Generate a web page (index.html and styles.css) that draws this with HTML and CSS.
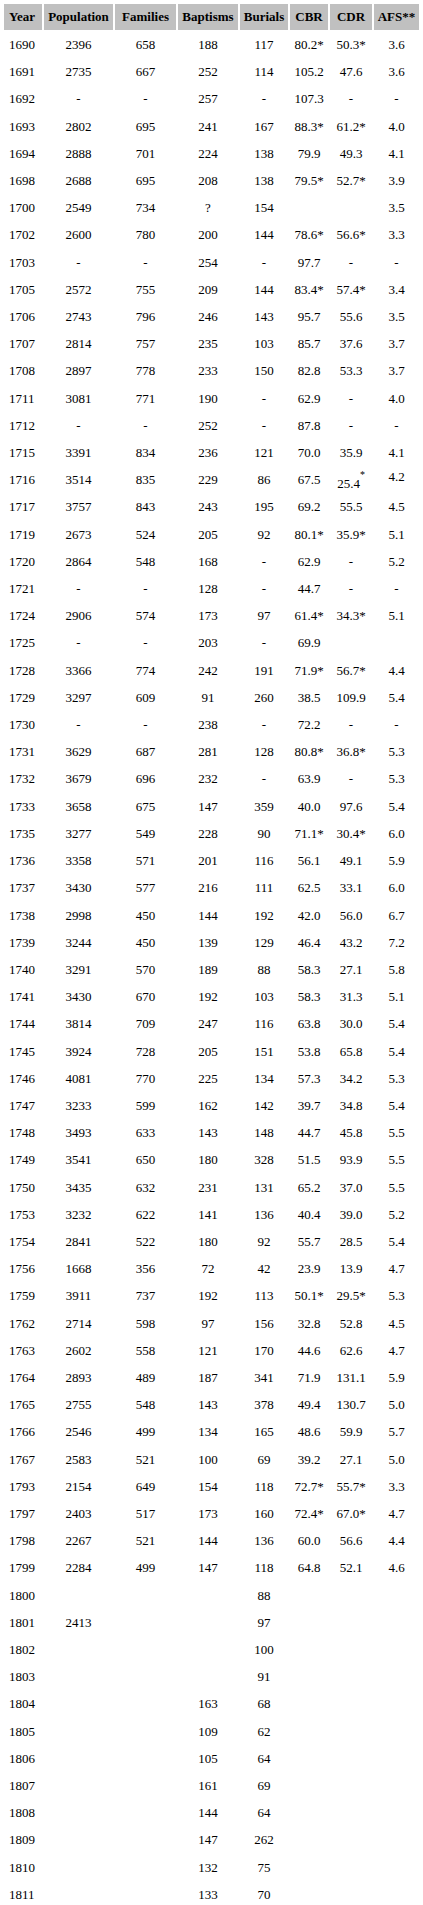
FILE: index.html
```html
<!DOCTYPE html>
<html>
<head>
<meta charset="utf-8">
<title>Population table</title>
<link rel="stylesheet" href="styles.css">
</head>
<body>
<table class="data">
<colgroup>
<col class="c-year"><col class="c-pop"><col class="c-fam"><col class="c-bap"><col class="c-bur"><col class="c-cbr"><col class="c-cdr"><col class="c-afs">
</colgroup>
<thead>
<tr class="head"><th>Year</th><th>Population</th><th>Families</th><th>Baptisms</th><th>Burials</th><th>CBR</th><th>CDR</th><th>AFS**</th></tr>
</thead>
<tbody>
<tr><td>1690</td><td>2396</td><td>658</td><td>188</td><td>117</td><td>80.2*</td><td>50.3*</td><td>3.6</td></tr>
<tr><td>1691</td><td>2735</td><td>667</td><td>252</td><td>114</td><td>105.2</td><td>47.6</td><td>3.6</td></tr>
<tr><td>1692</td><td>-</td><td>-</td><td>257</td><td>-</td><td>107.3</td><td>-</td><td>-</td></tr>
<tr><td>1693</td><td>2802</td><td>695</td><td>241</td><td>167</td><td>88.3*</td><td>61.2*</td><td>4.0</td></tr>
<tr><td>1694</td><td>2888</td><td>701</td><td>224</td><td>138</td><td>79.9</td><td>49.3</td><td>4.1</td></tr>
<tr><td>1698</td><td>2688</td><td>695</td><td>208</td><td>138</td><td>79.5*</td><td>52.7*</td><td>3.9</td></tr>
<tr><td>1700</td><td>2549</td><td>734</td><td>?</td><td>154</td><td></td><td></td><td>3.5</td></tr>
<tr><td>1702</td><td>2600</td><td>780</td><td>200</td><td>144</td><td>78.6*</td><td>56.6*</td><td>3.3</td></tr>
<tr><td>1703</td><td>-</td><td>-</td><td>254</td><td>-</td><td>97.7</td><td>-</td><td>-</td></tr>
<tr><td>1705</td><td>2572</td><td>755</td><td>209</td><td>144</td><td>83.4*</td><td>57.4*</td><td>3.4</td></tr>
<tr><td>1706</td><td>2743</td><td>796</td><td>246</td><td>143</td><td>95.7</td><td>55.6</td><td>3.5</td></tr>
<tr><td>1707</td><td>2814</td><td>757</td><td>235</td><td>103</td><td>85.7</td><td>37.6</td><td>3.7</td></tr>
<tr><td>1708</td><td>2897</td><td>778</td><td>233</td><td>150</td><td>82.8</td><td>53.3</td><td>3.7</td></tr>
<tr><td>1711</td><td>3081</td><td>771</td><td>190</td><td>-</td><td>62.9</td><td>-</td><td>4.0</td></tr>
<tr><td>1712</td><td>-</td><td>-</td><td>252</td><td>-</td><td>87.8</td><td>-</td><td>-</td></tr>
<tr><td>1715</td><td>3391</td><td>834</td><td>236</td><td>121</td><td>70.0</td><td>35.9</td><td>4.1</td></tr>
<tr><td>1716</td><td>3514</td><td>835</td><td>229</td><td>86</td><td>67.5</td><td><span class="low">25.4</span><sup class="mark">*</sup></td><td><span class="high">4.2</span></td></tr>
<tr><td>1717</td><td>3757</td><td>843</td><td>243</td><td>195</td><td>69.2</td><td>55.5</td><td>4.5</td></tr>
<tr><td>1719</td><td>2673</td><td>524</td><td>205</td><td>92</td><td>80.1*</td><td>35.9*</td><td>5.1</td></tr>
<tr><td>1720</td><td>2864</td><td>548</td><td>168</td><td>-</td><td>62.9</td><td>-</td><td>5.2</td></tr>
<tr><td>1721</td><td>-</td><td>-</td><td>128</td><td>-</td><td>44.7</td><td>-</td><td>-</td></tr>
<tr><td>1724</td><td>2906</td><td>574</td><td>173</td><td>97</td><td>61.4*</td><td>34.3*</td><td>5.1</td></tr>
<tr><td>1725</td><td>-</td><td>-</td><td>203</td><td>-</td><td>69.9</td><td></td><td></td></tr>
<tr><td>1728</td><td>3366</td><td>774</td><td>242</td><td>191</td><td>71.9*</td><td>56.7*</td><td>4.4</td></tr>
<tr><td>1729</td><td>3297</td><td>609</td><td>91</td><td>260</td><td>38.5</td><td>109.9</td><td>5.4</td></tr>
<tr><td>1730</td><td>-</td><td>-</td><td>238</td><td>-</td><td>72.2</td><td>-</td><td>-</td></tr>
<tr><td>1731</td><td>3629</td><td>687</td><td>281</td><td>128</td><td>80.8*</td><td>36.8*</td><td>5.3</td></tr>
<tr><td>1732</td><td>3679</td><td>696</td><td>232</td><td>-</td><td>63.9</td><td>-</td><td>5.3</td></tr>
<tr><td>1733</td><td>3658</td><td>675</td><td>147</td><td>359</td><td>40.0</td><td>97.6</td><td>5.4</td></tr>
<tr><td>1735</td><td>3277</td><td>549</td><td>228</td><td>90</td><td>71.1*</td><td>30.4*</td><td>6.0</td></tr>
<tr><td>1736</td><td>3358</td><td>571</td><td>201</td><td>116</td><td>56.1</td><td>49.1</td><td>5.9</td></tr>
<tr><td>1737</td><td>3430</td><td>577</td><td>216</td><td>111</td><td>62.5</td><td>33.1</td><td>6.0</td></tr>
<tr><td>1738</td><td>2998</td><td>450</td><td>144</td><td>192</td><td>42.0</td><td>56.0</td><td>6.7</td></tr>
<tr><td>1739</td><td>3244</td><td>450</td><td>139</td><td>129</td><td>46.4</td><td>43.2</td><td>7.2</td></tr>
<tr><td>1740</td><td>3291</td><td>570</td><td>189</td><td>88</td><td>58.3</td><td>27.1</td><td>5.8</td></tr>
<tr><td>1741</td><td>3430</td><td>670</td><td>192</td><td>103</td><td>58.3</td><td>31.3</td><td>5.1</td></tr>
<tr><td>1744</td><td>3814</td><td>709</td><td>247</td><td>116</td><td>63.8</td><td>30.0</td><td>5.4</td></tr>
<tr><td>1745</td><td>3924</td><td>728</td><td>205</td><td>151</td><td>53.8</td><td>65.8</td><td>5.4</td></tr>
<tr><td>1746</td><td>4081</td><td>770</td><td>225</td><td>134</td><td>57.3</td><td>34.2</td><td>5.3</td></tr>
<tr><td>1747</td><td>3233</td><td>599</td><td>162</td><td>142</td><td>39.7</td><td>34.8</td><td>5.4</td></tr>
<tr><td>1748</td><td>3493</td><td>633</td><td>143</td><td>148</td><td>44.7</td><td>45.8</td><td>5.5</td></tr>
<tr><td>1749</td><td>3541</td><td>650</td><td>180</td><td>328</td><td>51.5</td><td>93.9</td><td>5.5</td></tr>
<tr><td>1750</td><td>3435</td><td>632</td><td>231</td><td>131</td><td>65.2</td><td>37.0</td><td>5.5</td></tr>
<tr><td>1753</td><td>3232</td><td>622</td><td>141</td><td>136</td><td>40.4</td><td>39.0</td><td>5.2</td></tr>
<tr><td>1754</td><td>2841</td><td>522</td><td>180</td><td>92</td><td>55.7</td><td>28.5</td><td>5.4</td></tr>
<tr><td>1756</td><td>1668</td><td>356</td><td>72</td><td>42</td><td>23.9</td><td>13.9</td><td>4.7</td></tr>
<tr><td>1759</td><td>3911</td><td>737</td><td>192</td><td>113</td><td>50.1*</td><td>29.5*</td><td>5.3</td></tr>
<tr><td>1762</td><td>2714</td><td>598</td><td>97</td><td>156</td><td>32.8</td><td>52.8</td><td>4.5</td></tr>
<tr><td>1763</td><td>2602</td><td>558</td><td>121</td><td>170</td><td>44.6</td><td>62.6</td><td>4.7</td></tr>
<tr><td>1764</td><td>2893</td><td>489</td><td>187</td><td>341</td><td>71.9</td><td>131.1</td><td>5.9</td></tr>
<tr><td>1765</td><td>2755</td><td>548</td><td>143</td><td>378</td><td>49.4</td><td>130.7</td><td>5.0</td></tr>
<tr><td>1766</td><td>2546</td><td>499</td><td>134</td><td>165</td><td>48.6</td><td>59.9</td><td>5.7</td></tr>
<tr><td>1767</td><td>2583</td><td>521</td><td>100</td><td>69</td><td>39.2</td><td>27.1</td><td>5.0</td></tr>
<tr><td>1793</td><td>2154</td><td>649</td><td>154</td><td>118</td><td>72.7*</td><td>55.7*</td><td>3.3</td></tr>
<tr><td>1797</td><td>2403</td><td>517</td><td>173</td><td>160</td><td>72.4*</td><td>67.0*</td><td>4.7</td></tr>
<tr><td>1798</td><td>2267</td><td>521</td><td>144</td><td>136</td><td>60.0</td><td>56.6</td><td>4.4</td></tr>
<tr><td>1799</td><td>2284</td><td>499</td><td>147</td><td>118</td><td>64.8</td><td>52.1</td><td>4.6</td></tr>
<tr><td>1800</td><td></td><td></td><td></td><td>88</td><td></td><td></td><td></td></tr>
<tr><td>1801</td><td>2413</td><td></td><td></td><td>97</td><td></td><td></td><td></td></tr>
<tr><td>1802</td><td></td><td></td><td></td><td>100</td><td></td><td></td><td></td></tr>
<tr><td>1803</td><td></td><td></td><td></td><td>91</td><td></td><td></td><td></td></tr>
<tr><td>1804</td><td></td><td></td><td>163</td><td>68</td><td></td><td></td><td></td></tr>
<tr><td>1805</td><td></td><td></td><td>109</td><td>62</td><td></td><td></td><td></td></tr>
<tr><td>1806</td><td></td><td></td><td>105</td><td>64</td><td></td><td></td><td></td></tr>
<tr><td>1807</td><td></td><td></td><td>161</td><td>69</td><td></td><td></td><td></td></tr>
<tr><td>1808</td><td></td><td></td><td>144</td><td>64</td><td></td><td></td><td></td></tr>
<tr><td>1809</td><td></td><td></td><td>147</td><td>262</td><td></td><td></td><td></td></tr>
<tr><td>1810</td><td></td><td></td><td>132</td><td>75</td><td></td><td></td><td></td></tr>
<tr><td>1811</td><td></td><td></td><td>133</td><td>70</td><td></td><td></td><td></td></tr>
</tbody>
</table>
</body>
</html>
```

FILE: styles.css
```css
html, body {
  margin: 0;
  padding: 0;
  background: #ffffff;
}

body {
  padding: 2px;
  font-family: "Liberation Serif", "Times New Roman", serif;
  font-size: 13px;
  color: #000000;
}

.data {
  border-collapse: separate;
  border-spacing: 2px;
  table-layout: fixed;
  width: 419px;
}

.c-year { width: 38px; }
.c-pop { width: 69px; }
.c-fam { width: 61px; }
.c-bap { width: 60px; }
.c-bur { width: 48px; }
.c-cbr { width: 38px; }
.c-cdr { width: 42px; }
.c-afs { width: 45px; }

.data th {
  background: #c0c0c0;
  font-weight: bold;
  padding: 5px 0;
  line-height: 16px;
  text-align: center;
  white-space: nowrap;
}

.data th:first-child {
  text-align: left;
  padding-left: 5px;
}

.data td {
  padding: 5px 0;
  line-height: 15.2px;
  text-align: center;
  white-space: nowrap;
}

.data td:first-child {
  text-align: left;
  padding-left: 5px;
}

.low {
  position: relative;
  top: 4px;
}

.high {
  position: relative;
  top: -3px;
}

.mark {
  font-size: 10px;
  line-height: 0;
  vertical-align: 6px;
}
```
